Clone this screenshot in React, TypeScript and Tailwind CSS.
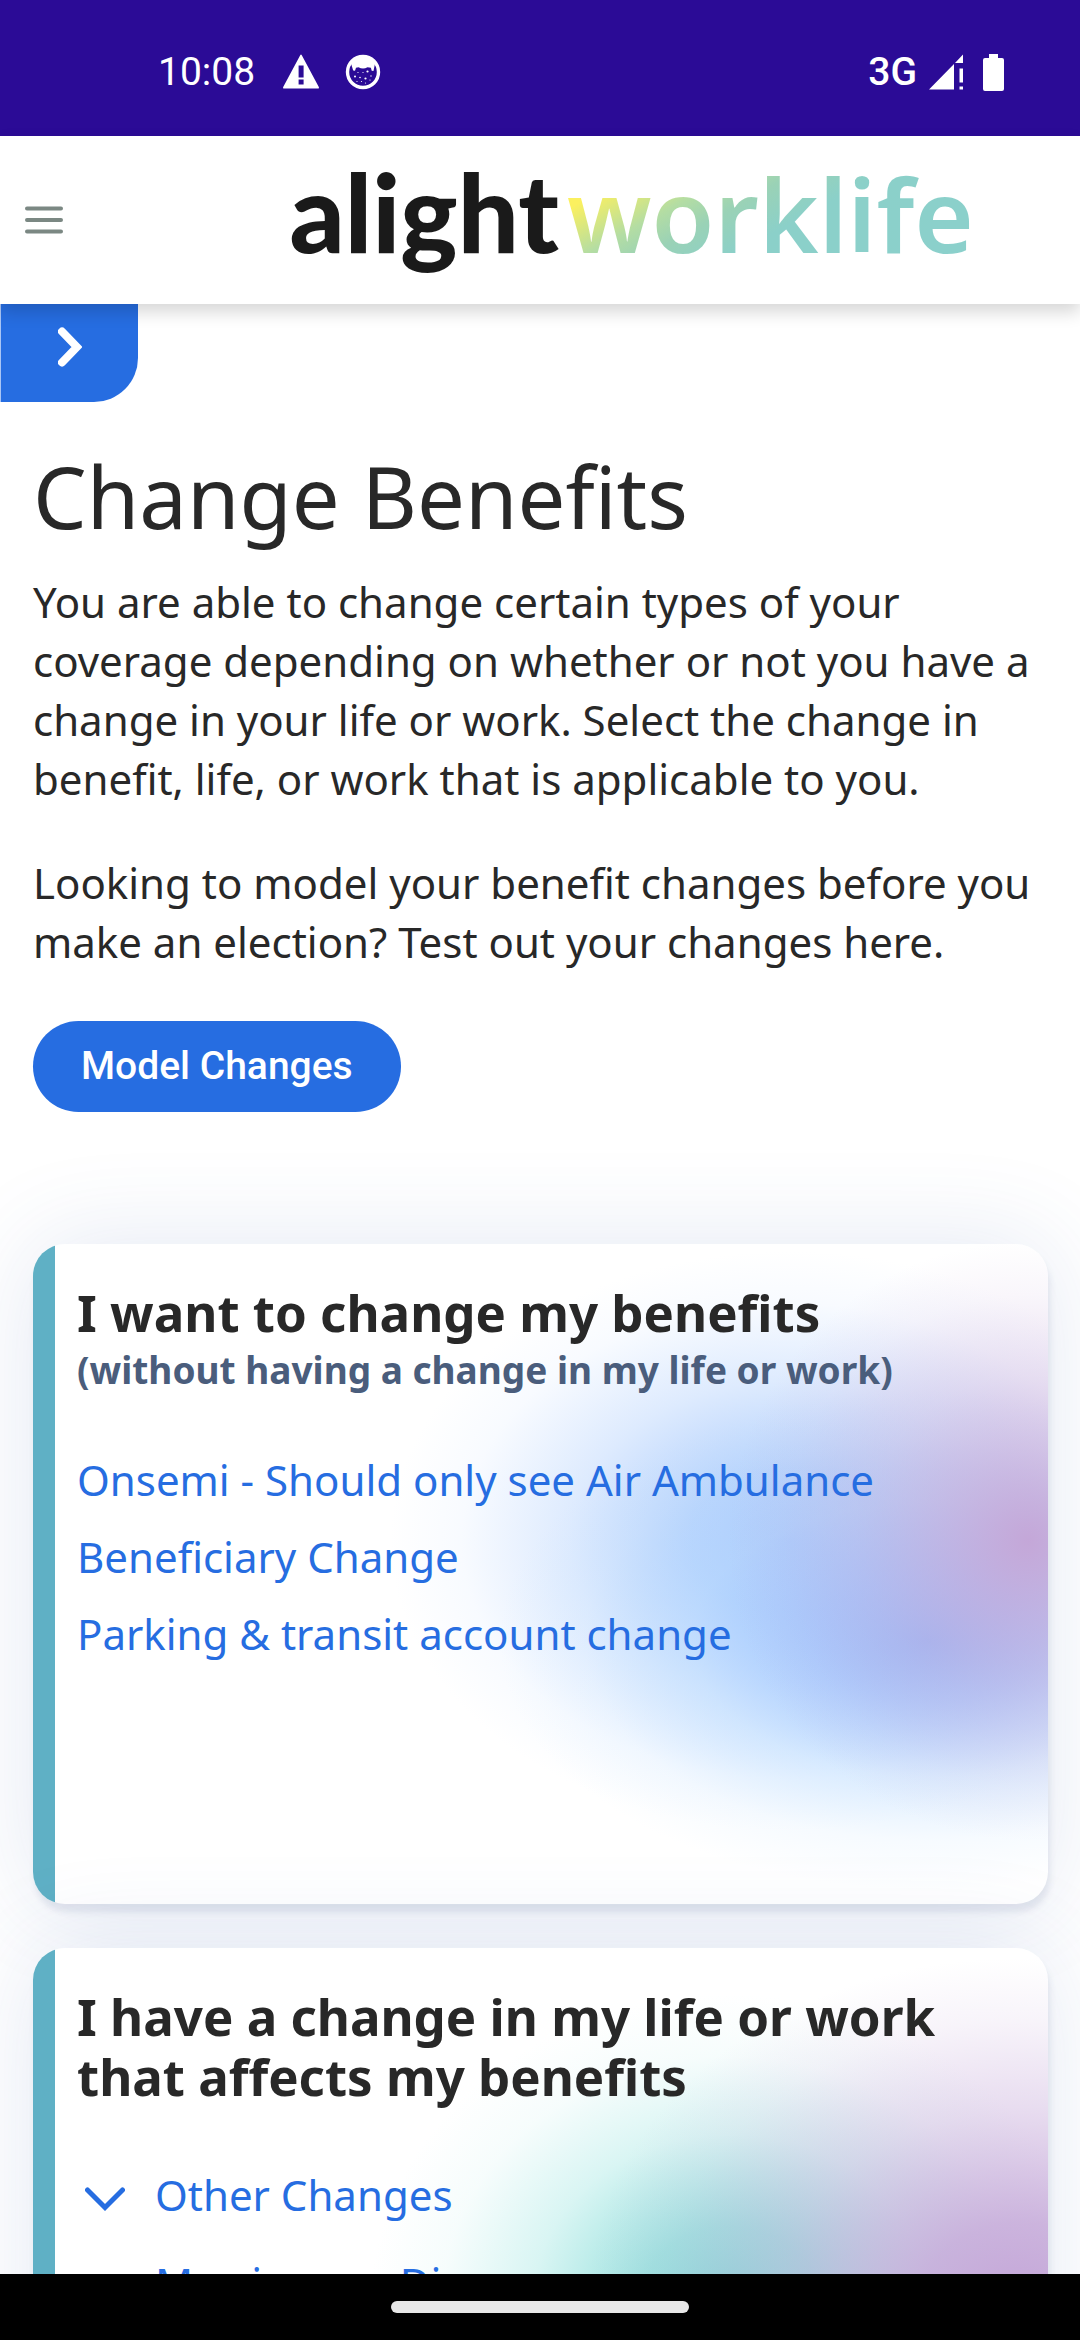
import { useState, type ReactNode } from "react";

const CHANGE_LINKS = [
  "Onsemi - Should only see Air Ambulance",
  "Beneficiary Change",
  "Parking & transit account change",
];

const LIFE_EVENTS = ["Other Changes", "Marriage or Divorce"];

const StatusBar = () => (
  <div className="flex h-[136px] shrink-0 items-center justify-between bg-[#2b0b96] pt-2 pr-[76px] pl-[158px] font-['Roboto',sans-serif] text-[39px] leading-none text-white">
    <div className="flex items-center">
      <span>10:08</span>
      <svg className="ml-7 h-9 w-9" viewBox="0 0 36 36" aria-hidden="true">
        <path
          fill="currentColor"
          fillRule="evenodd"
          d="M17.2 1.200q.8-1.200 1.600 0L35.800 33q.6 1.600-1 1.600H1.200q-1.600 0-1-1.600zM15.600 11.500v12h5v-12zM15.600 25.500v5h5v-5z"
        />
      </svg>
      <svg className="ml-[26px] h-9 w-9" viewBox="0 0 36 36" aria-hidden="true">
        <circle cx="18" cy="18" r="15.500" fill="none" stroke="currentColor" strokeWidth="3.400" />
        <path
          fill="currentColor"
          d="M6 9.500Q10 3 18 2.500T30 9.500L28.500 17l-1.800-.2-.8-3-3.400-.6Q18 16 13.500 13.200l-2.500.6-1 3-1.800-.4z"
        />
        <g fill="currentColor">
          <circle cx="10" cy="22.500" r="1" />
          <circle cx="22.500" cy="17.500" r="1.100" />
          <circle cx="20.500" cy="24.500" r="1.100" />
          <circle cx="15" cy="23.500" r=".8" />
          <circle cx="26" cy="22" r=".7" />
          <circle cx="12" cy="27.500" r=".6" />
          <circle cx="16.500" cy="27.500" r=".6" />
          <circle cx="20.500" cy="29" r=".6" />
          <circle cx="25" cy="26" r=".6" />
          <circle cx="13" cy="18.500" r=".6" />
          <circle cx="18" cy="18.500" r=".6" />
        </g>
      </svg>
    </div>
    <div className="flex items-center">
      <span className="font-medium">3G</span>
      <svg className="ml-3 h-9 w-[34px]" viewBox="0 0 34 36" aria-hidden="true">
        <path
          fill="currentColor"
          d="M0 35.500L25 10v25.500zM26 9l8-8.500V9zM30.500 14.500H34v14h-3.500zM30.500 32.500H34v3h-3.500z"
        />
      </svg>
      <svg className="ml-5 h-[37px] w-[21px]" viewBox="0 0 21 37" aria-hidden="true">
        <path
          fill="currentColor"
          d="M6 0h9v4h4q2 0 2 2v29q0 2-2 2H2q-2 0-2-2V6q0-2 2-2h4z"
        />
      </svg>
    </div>
  </div>
);

const Header = () => (
  <header className="relative z-10 flex h-[168px] shrink-0 items-center bg-white pr-[106px] shadow-[0_8px_16px_rgba(0,0,0,0.16)]">
    <button type="button" aria-label="Menu" className="p-6">
      <svg className="h-10 w-10" viewBox="0 0 40 40" aria-hidden="true">
        <path
          d="M3 8.500h34M3 20h34M3 31.500h34"
          stroke="#7b8883"
          strokeWidth="4"
          strokeLinecap="round"
        />
      </svg>
    </button>
    <a
      href="#home"
      className="ml-auto flex items-baseline pb-4 leading-[120px] whitespace-nowrap"
    >
      <span className="font-['Lato',sans-serif] text-[108px] font-black text-[#1a1a1a]">
        alight
      </span>
      <span className="ml-2 bg-[linear-gradient(151deg,#fbf05f_16%,#b4dda3_32%,#9ad2b6_42%,#8bd0c9_56%,#8bd0cc_100%)] bg-clip-text font-['Noto_Sans',sans-serif] text-[102px] font-semibold text-transparent">
        worklife
      </span>
    </a>
  </header>
);

const Intro = () => {
  const [drawerOpen, setDrawerOpen] = useState(false);

  return (
    <section>
      <button
        type="button"
        aria-label="Open side panel"
        aria-expanded={drawerOpen}
        onClick={() => setDrawerOpen(!drawerOpen)}
        className="flex h-[98px] w-[138px] items-center justify-center rounded-br-[44px] border-l border-[#a9c5f5] bg-[#266de1] pb-3 text-white"
      >
        <svg className="h-10 w-6" viewBox="0 0 24 40" aria-hidden="true">
          <path
            d="M4 4.500L19 20 4 35.500"
            fill="none"
            stroke="currentColor"
            strokeWidth="8"
            strokeLinecap="round"
          />
        </svg>
      </button>
      <div className="px-[33px]">
        <h1 className="mt-11 text-[85px] leading-[100px]">Change Benefits</h1>
        <p className="mt-[26px] leading-[59px]">
          You are able to change certain types of your coverage depending on
          whether or not you have a change in your life or work. Select the
          change in benefit, life, or work that is applicable to you.
        </p>
        <p className="mt-[45px] leading-[59px]">
          Looking to model your benefit changes before you make an election?
          Test out your changes here.
        </p>
        <button
          type="button"
          className="mt-[50px] h-[91px] rounded-full bg-[#266de1] px-12 font-['Roboto',sans-serif] text-[39px] font-medium text-white"
        >
          Model Changes
        </button>
      </div>
    </section>
  );
};

type CardProps = {
  glow: string;
  children: ReactNode;
};

const Card = ({ glow, children }: CardProps) => (
  <section className="flex min-h-[660px] overflow-hidden rounded-[32px] bg-white shadow-[2px_8px_6px_rgba(50,70,120,0.1),0_0_100px_rgba(60,90,170,0.14)]">
    <div className="w-[22px] shrink-0 bg-[#5fb0c5]" />
    <div className={`flex-1 pt-[38px] pr-6 pl-[22px] ${glow}`}>{children}</div>
  </section>
);

const BenefitsCard = () => (
  <Card glow="bg-[radial-gradient(300px_300px_at_98%_45%,#c4a7d8_0%,#c4a7d8b3_25%,#c4a7d859_55%,#c4a7d81a_82%,#c4a7d800_100%),radial-gradient(430px_250px_at_88%_60%,#98bdfb_0%,#a0c6ffcc_25%,#b5d9ff73_55%,#c5e3ff26_80%,#c5e3ff00_100%),radial-gradient(400px_290px_at_74%_45%,#a8c6fb_0%,#aacbfcd9_25%,#b5d2fd73_55%,#c5dcff1f_82%,#c5dcff00_100%)]">
    <h2 className="text-[51px] leading-[60px] font-bold">
      I want to change my benefits
    </h2>
    <p className="text-[37px] leading-[56px] font-bold text-[#4a5d7c]">
      (without having a change in my life or work)
    </p>
    <ul className="mt-[52px] flex flex-col items-start gap-[18px]">
      {CHANGE_LINKS.map((label) => (
        <li key={label}>
          <a href="#change" className="block leading-[59px] text-[#266de1]">
            {label}
          </a>
        </li>
      ))}
    </ul>
  </Card>
);

const LifeEventCard = () => {
  const [openEvent, setOpenEvent] = useState("");

  return (
    <Card glow="bg-[radial-gradient(430px_340px_at_97%_53%,#c4a7d8_0%,#c4a7d8d9_22%,#c4a7d866_55%,#c4a7d81f_82%,#c4a7d800_100%),radial-gradient(360px_310px_at_68%_54%,#85dad7_0%,#93e0dce6_25%,#aae9e573_55%,#c4efec26_80%,#c4efec00_100%)]">
      <h2 className="text-[51px] leading-[60px] font-bold">
        I have a change in my life or work that affects my benefits
      </h2>
      <ul className="mt-[59px] flex flex-col gap-[29px]">
        {LIFE_EVENTS.map((label) => (
          <li key={label}>
            <button
              type="button"
              aria-expanded={openEvent === label}
              onClick={() => setOpenEvent(openEvent === label ? "" : label)}
              className="flex items-center gap-[30px] pl-2 leading-[59px] text-[#266de1]"
            >
              <svg className="mt-2 h-6 w-10" viewBox="0 0 40 24" aria-hidden="true">
                <path
                  d="M2.500 3L20 20.500 37.500 3"
                  fill="none"
                  stroke="currentColor"
                  strokeWidth="5"
                  strokeLinecap="round"
                />
              </svg>
              {label}
            </button>
          </li>
        ))}
      </ul>
    </Card>
  );
};

export default function App() {
  return (
    <div className="flex h-screen flex-col bg-white font-['Noto_Sans',sans-serif] text-[42px] text-[#282828]">
      <StatusBar />
      <Header />
      <main className="min-h-0 flex-1 overflow-hidden">
        <Intro />
        <div className="mt-[132px] mr-8 ml-[33px] flex flex-col gap-11">
          <BenefitsCard />
          <LifeEventCard />
        </div>
      </main>
      <div className="flex h-[66px] shrink-0 items-center justify-center bg-black">
        <div className="h-3 w-[298px] rounded-full bg-[#e8e8e8]" />
      </div>
    </div>
  );
}
